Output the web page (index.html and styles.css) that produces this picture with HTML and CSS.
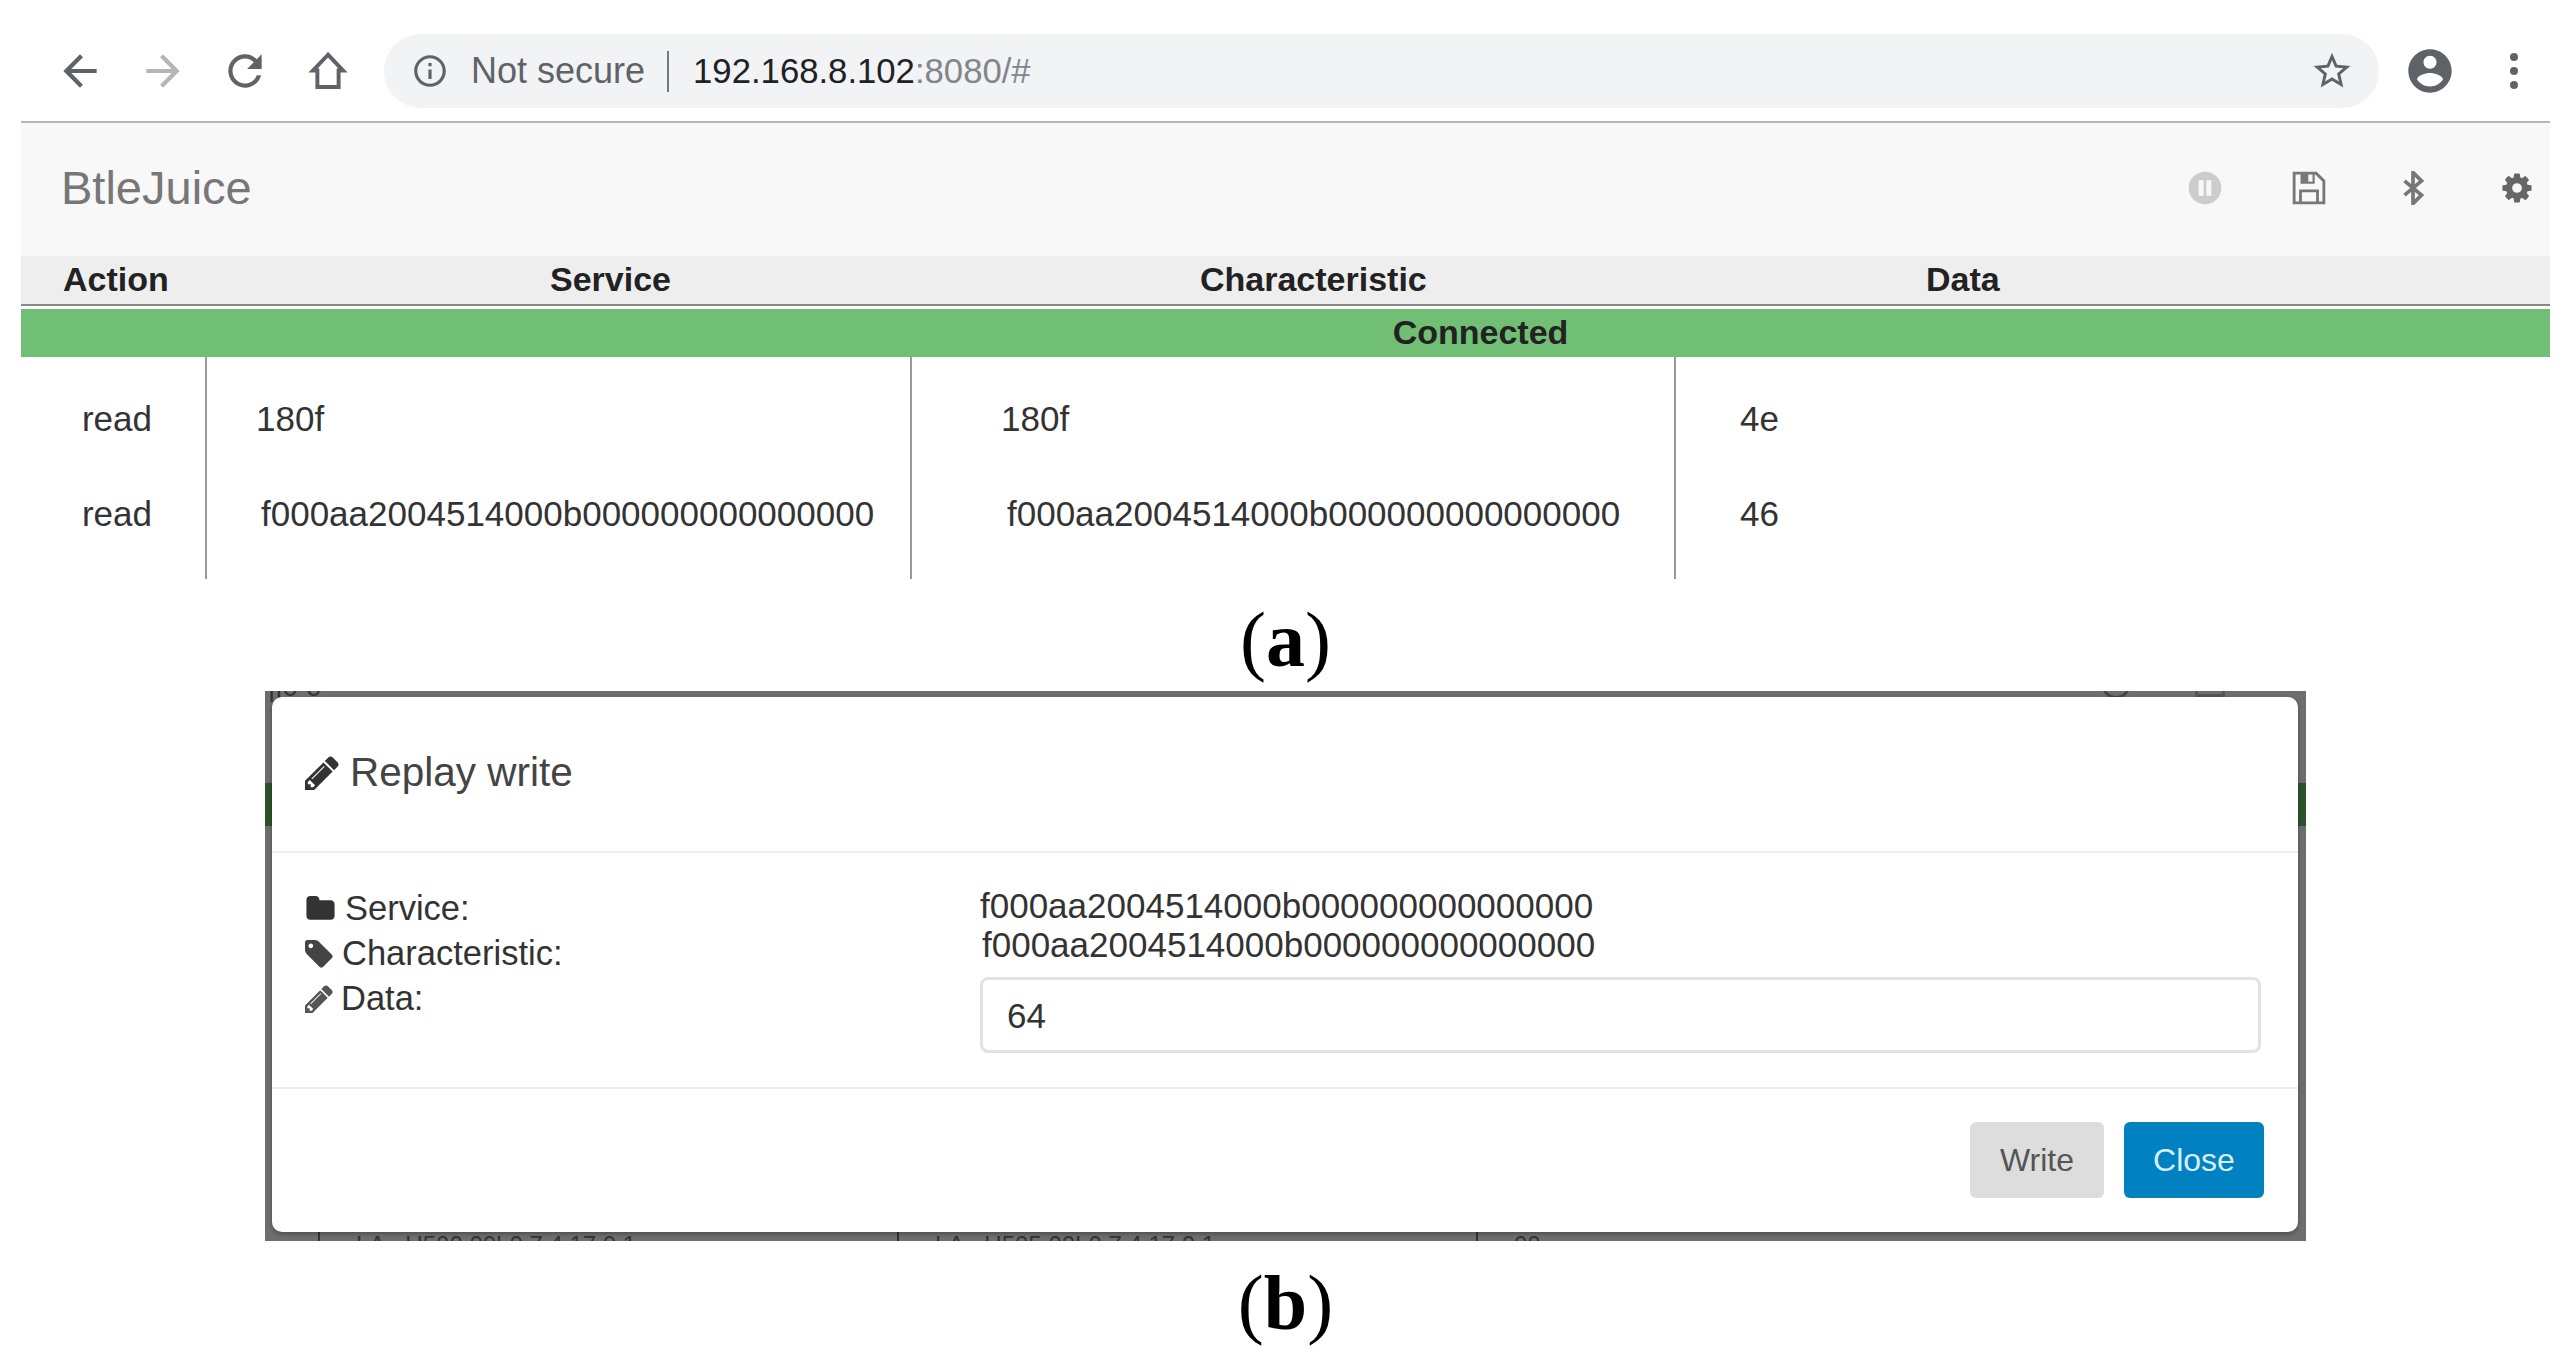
FILE: index.html
```html
<!DOCTYPE html>
<html lang="en">
<head>
<meta charset="UTF-8">
<title>BtleJuice</title>
<link rel="stylesheet" href="styles.css">
</head>
<body>
<div class="browser">
    <div class="toolbar">
        <div class="tool"><svg class="chrome-icon" viewBox="0 0 24 24"><path d="M20 11H7.83l5.59-5.59L12 4l-8 8 8 8 1.41-1.41L7.83 13H20v-2z"/></svg></div>
        <div class="tool tool-off"><svg class="chrome-icon" viewBox="0 0 24 24"><path d="M12 4l-1.41 1.41L16.17 11H4v2h12.17l-5.58 5.59L12 20l8-8z"/></svg></div>
        <div class="tool"><svg class="chrome-icon" viewBox="0 0 24 24"><path d="M17.65 6.35C16.2 4.9 14.21 4 12 4c-4.42 0-7.99 3.58-7.99 8s3.57 8 7.99 8c3.73 0 6.84-2.55 7.73-6h-2.08c-.82 2.33-3.04 4-5.65 4-3.31 0-6-2.69-6-6s2.69-6 6-6c1.66 0 3.14.69 4.22 1.78L13 11h7V4l-2.35 2.35z"/></svg></div>
        <div class="tool"><svg class="chrome-icon" viewBox="0 0 24 24"><path class="home-line" d="M12 4.200L4.800 11.800H6.900V19.700H17.100V11.800H19.200z"/></svg></div>
        <div class="omnibox">
            <svg class="info-icon" viewBox="0 0 24 24"><path d="M11 7h2v2h-2zm0 4h2v6h-2zm1-9C6.48 2 2 6.48 2 12s4.48 10 10 10 10-4.48 10-10S17.52 2 12 2zm0 18c-4.41 0-8-3.59-8-8s3.59-8 8-8 8 3.59 8 8-3.59 8-8 8z"/></svg>
            <span class="not-secure">Not secure</span>
            <span class="omni-sep"></span>
            <span class="url">192.168.8.102<span class="url-dim">:8080/#</span></span>
            <svg class="star-icon" viewBox="0 0 24 24"><path d="M22 9.24l-7.19-.62L12 2 9.19 8.63 2 9.24l5.46 4.73L5.82 21 12 17.27 18.18 21l-1.63-7.03L22 9.24zM12 15.4l-3.76 2.27 1-4.28-3.32-2.88 4.38-.38L12 6.1l1.71 4.04 4.38.38-3.32 2.88 1 4.28L12 15.4z"/></svg>
        </div>
        <svg class="account-icon" viewBox="0 0 24 24"><path d="M12 2C6.48 2 2 6.48 2 12s4.48 10 10 10 10-4.48 10-10S17.52 2 12 2zm0 3c1.66 0 3 1.34 3 3s-1.34 3-3 3-3-1.34-3-3 1.34-3 3-3zm0 14.2c-2.5 0-4.71-1.28-6-3.22.03-1.99 4-3.08 6-3.08 1.99 0 5.97 1.09 6 3.08-1.29 1.94-3.5 3.22-6 3.22z"/></svg>
        <div class="kebab"><span></span><span></span><span></span></div>
    </div>

    <div class="navbar">
        <div class="brand">BtleJuice</div>
        <div class="nav-icons">
            <svg class="nav-icon" viewBox="0 0 24 24"><circle cx="12" cy="12" r="11.5" fill="#ccc"/><rect x="7.5" y="6.5" width="3.5" height="11" fill="#f8f8f8"/><rect x="13" y="6.5" width="3.5" height="11" fill="#f8f8f8"/></svg>
            <svg class="nav-icon" viewBox="0 0 24 24"><path class="nav-line" d="M1.500 1.500H17L22.500 7V22.500H1.500z"/><path d="M6 1.500H16V9H6z" fill="#777"/><path d="M11.500 2.500H14.500V7.500H11.500z" fill="#f8f8f8"/><path class="nav-line" d="M6 22.500V14H18V22.500"/></svg>
            <svg class="nav-icon" viewBox="0 0 24 24"><path class="nav-line bt-line" d="M6 7l12 10-6 6V1l6 6L6 17"/></svg>
            <svg class="nav-icon" viewBox="0 0 1792 1792"><path fill="#666" d="M1152 896q0-106-75-181t-181-75-181 75-75 181 75 181 181 75 181-75 75-181zm512-109v222q0 12-8 23t-20 13l-185 28q-19 54-39 91 35 50 107 138 10 12 10 25t-9 23q-27 37-99 108t-94 71q-12 0-26-9l-138-108q-44 23-91 38-16 136-29 186-7 28-36 28h-222q-14 0-24.5-8.5t-11.5-21.5l-28-184q-49-16-90-37l-141 107q-10 9-25 9-14 0-25-11-126-114-165-168-7-10-7-23 0-12 8-23 15-21 51-66.5t54-70.5q-27-50-41-99l-183-27q-13-2-21-12.5t-8-23.5v-222q0-12 8-23t19-13l186-28q14-46 39-92-40-57-107-138-10-12-10-24 0-10 9-23 26-36 98.5-107.5t94.5-71.5q13 0 26 10l138 107q44-23 91-38 16-136 29-186 7-28 36-28h222q14 0 24.5 8.5t11.5 21.5l28 184q49 16 90 37l142-107q9-9 24-9 13 0 25 10 129 119 165 170 7 8 7 22 0 12-8 23-15 21-51 66.5t-54 70.5q26 50 41 98l183 28q13 2 21 12.5t8 23.5z"/></svg>
        </div>
    </div>

    <div class="list-head">
        <div>Action</div>
        <div>Service</div>
        <div>Characteristic</div>
        <div>Data</div>
    </div>
    <div class="status">Connected</div>

    <table class="log">
        <colgroup>
            <col class="col-action">
            <col class="col-service">
            <col class="col-char">
            <col>
        </colgroup>
        <tr>
            <td class="action">read</td>
            <td class="short-service">180f</td>
            <td class="short-char">180f</td>
            <td class="data">4e</td>
        </tr>
        <tr>
            <td class="action">read</td>
            <td class="long-service">f000aa2004514000b000000000000000</td>
            <td class="long-char">f000aa2004514000b000000000000000</td>
            <td class="data">46</td>
        </tr>
    </table>
</div>

<div class="caption caption-a">(<b>a</b>)</div>

<div class="backdrop">
    <div class="strip"></div>
    <div class="ghost ghost-top">||0 0</div>
    <div class="ghost ghost-dot-a"></div>
    <div class="ghost ghost-dot-b"></div>
    <div class="ghost-row">
        <div class="ghost-cell ghost-c1">LA...U500 00L0 7 4 17 0 1</div>
        <div class="ghost-cell ghost-c2">LA...U505 00L0 7 4 17 0 1</div>
        <div class="ghost-cell">00</div>
    </div>
    <div class="modal">
        <div class="modal-header">
            <svg class="title-icon" viewBox="128 128 1536 1536"><path d="M491 1536l91-91-235-235-91 91v107h128v128h107zm523-928q0-22-22-22-10 0-17 7l-542 542q-7 7-7 17 0 22 22 22 10 0 17-7l542-542q7-7 7-17zm-54-192l416 416-832 832h-416v-416zm683 96q0 53-37 90l-166 166-416-416 166-165q36-38 90-38 53 0 91 38l235 234q37 39 37 91z"/></svg>
            <span class="modal-title">Replay write</span>
        </div>
        <div class="modal-body">
            <div class="labels">
                <div class="label"><svg class="folder-icon" viewBox="64 128 1664 1536"><path d="M1728 608v704q0 92-66 158t-158 66h-1216q-92 0-158-66t-66-158v-960q0-92 66-158t158-66h320q92 0 158 66t66 158v32h672q92 0 158 66t66 158z"/></svg>Service:</div>
                <div class="label"><svg class="tag-icon" viewBox="128 128 1536 1536"><path d="M576 448q0-53-37.5-90.5t-90.5-37.5-90.5 37.5-37.5 90.5 37.5 90.5 90.5 37.5 90.5-37.5 37.5-90.5zm1067 576q0 53-37 90l-491 492q-39 37-91 37-53 0-90-37l-715-716q-38-37-64.5-101t-26.5-117v-416q0-52 38-90t90-38h416q53 0 117 26.5t102 64.5l715 714q37 39 37 91z"/></svg>Characteristic:</div>
                <div class="label"><svg class="pencil-icon" viewBox="128 128 1536 1536"><path d="M491 1536l91-91-235-235-91 91v107h128v128h107zm523-928q0-22-22-22-10 0-17 7l-542 542q-7 7-7 17 0 22 22 22 10 0 17-7l542-542q7-7 7-17zm-54-192l416 416-832 832h-416v-416zm683 96q0 53-37 90l-166 166-416-416 166-165q36-38 90-38 53 0 91 38l235 234q37 39 37 91z"/></svg>Data:</div>
            </div>
            <div class="values">
                <div class="value">f000aa2004514000b000000000000000</div>
                <div class="value value-shift">f000aa2004514000b000000000000000</div>
                <div class="data-input">64</div>
            </div>
        </div>
        <div class="modal-footer">
            <div class="btn btn-write">Write</div>
            <div class="btn btn-close">Close</div>
        </div>
    </div>
</div>

<div class="caption caption-b">(<b>b</b>)</div>
</body>
</html>
```

FILE: styles.css
```css
body {
    margin: 0;
    padding: 0 24px 0 21px;
    height: 1357px;
    overflow: hidden;
    background: #fff;
    font-family: "Liberation Sans", Arial, sans-serif;
    color: #333;
}

/* browser chrome */
.toolbar {
    display: flex;
    align-items: center;
    height: 121px;
    padding: 34px 0 13px 18px;
    box-sizing: border-box;
}
.tool {
    width: 82.5px;
    display: flex;
    justify-content: center;
    flex: none;
}
.chrome-icon {
    width: 50px;
    height: 50px;
    fill: #5f6368;
}
.tool-off .chrome-icon {
    fill: #b4b6b9;
}
.chrome-icon .home-line {
    fill: none;
    stroke: #5f6368;
    stroke-width: 1.9;
}
.omnibox {
    display: flex;
    align-items: center;
    width: 1995px;
    height: 74px;
    margin-left: 15px;
    padding-left: 27px;
    box-sizing: border-box;
    background: #f1f3f4;
    border-radius: 37px;
    font-size: 35px;
    flex: none;
}
.info-icon {
    width: 38px;
    height: 38px;
    fill: #5f6368;
    flex: none;
}
.not-secure {
    margin-left: 22px;
    font-size: 36px;
    color: #5f6368;
}
.omni-sep {
    width: 2px;
    height: 41px;
    margin: 0 24px 0 22px;
    background: #777;
}
.url {
    font-size: 34.7px;
    color: #202124;
}
.url-dim {
    color: #80868b;
}
.star-icon {
    width: 44px;
    height: 44px;
    margin-left: auto;
    margin-right: 25px;
    fill: #5f6368;
}
.account-icon {
    width: 52px;
    height: 52px;
    margin-left: 25px;
    fill: #5f6368;
    flex: none;
}
.kebab {
    display: flex;
    flex-direction: column;
    gap: 6px;
    margin-left: 54px;
}
.kebab span {
    width: 8px;
    height: 8px;
    border-radius: 50%;
    background: #5f6368;
}

/* app header */
.navbar {
    display: flex;
    align-items: center;
    justify-content: space-between;
    height: 129px;
    padding: 0 16px 4px 40px;
    background: #f8f8f8;
    border-top: 2px solid #b5b5b5;
}
.brand {
    font-size: 47px;
    color: #777;
}
.nav-icons {
    display: flex;
    align-items: center;
    gap: 70px;
}
.nav-icon {
    width: 34px;
    height: 34px;
}
.nav-line {
    fill: none;
    stroke: #777;
    stroke-width: 2;
}
.bt-line {
    stroke-width: 2.6;
}
.list-head {
    display: grid;
    grid-template-columns: 487px 650px 726px 1fr;
    align-items: center;
    height: 46px;
    padding: 0 0 2px 42px;
    background: #eee;
    border-bottom: 2px solid #888;
    font-size: 34px;
    font-weight: bold;
    color: #222;
}
.status {
    margin-top: 3px;
    height: 48px;
    line-height: 46px;
    padding-left: 390px;
    text-align: center;
    background: #71bf75;
    font-size: 34px;
    font-weight: bold;
    color: #222;
}

/* log table */
.log {
    width: 100%;
    table-layout: fixed;
    border-collapse: collapse;
    font-size: 35px;
    color: #333;
}
.col-action {
    width: 185px;
}
.col-service {
    width: 705px;
}
.col-char {
    width: 764px;
}
.log td {
    height: 95px;
    padding: 0;
    white-space: nowrap;
    border-left: 2px solid #999;
}
.log td:first-child {
    border-left: 0;
}
.log tr:first-child td {
    height: 109px;
    padding-top: 14px;
    box-sizing: border-box;
}
.log tr:last-child td {
    height: 113px;
    padding-bottom: 18px;
    box-sizing: border-box;
}
.log .action {
    padding-left: 8px;
    text-align: center;
}
.log .short-service {
    padding-left: 49px;
}
.log .long-service {
    padding-left: 54px;
}
.log .short-char {
    padding-left: 89px;
}
.log .long-char {
    padding-left: 95px;
}
.log .data {
    padding-left: 64px;
}

/* figure captions */
.caption {
    text-align: center;
    font-family: "Liberation Serif", "Times New Roman", serif;
    font-size: 78px;
    color: #000;
}
.caption-a {
    height: 112px;
    line-height: 122px;
}
.caption-b {
    height: 116px;
    line-height: 124px;
}

/* replay dialog on the dimmed page */
.backdrop {
    position: relative;
    width: 2041px;
    height: 550px;
    margin: 0 auto;
    padding: 6px 8px 9px 7px;
    box-sizing: border-box;
    background: #6e6e6e;
    overflow: hidden;
}
.strip {
    position: absolute;
    left: 0;
    right: 0;
    top: 92px;
    height: 43px;
    background: #2d5229;
}
.ghost {
    position: absolute;
    color: #333;
}
.ghost-top {
    left: 3px;
    top: -20px;
    font-size: 28px;
}
.ghost-dot-a {
    left: 1838px;
    top: -14px;
    width: 20px;
    height: 16px;
    border: 3px solid #444;
    border-radius: 50%;
}
.ghost-dot-b {
    left: 1930px;
    top: -12px;
    width: 24px;
    height: 12px;
    border: 3px solid #555;
}
.ghost-row {
    position: absolute;
    left: 53px;
    right: 0;
    bottom: 0;
    height: 11px;
    display: grid;
    grid-template-columns: 579px 579px 1fr;
    overflow: hidden;
}
.ghost-cell {
    border-left: 2px solid #333;
    padding: 3px 0 0 36px;
    font-size: 24px;
    line-height: 24px;
    color: #333;
    white-space: nowrap;
}
.modal {
    position: relative;
    display: flex;
    flex-direction: column;
    height: 535px;
    background: #fff;
    border-radius: 10px;
    box-shadow: 0 2px 4px rgba(0, 0, 0, 0.3);
}
.modal-header {
    display: flex;
    align-items: center;
    height: 156px;
    padding: 0 0 3px 33px;
    box-sizing: border-box;
    border-bottom: 2px solid #eee;
}
.title-icon {
    width: 34px;
    height: 34px;
    margin-right: 11px;
    fill: #333;
}
.modal-title {
    font-size: 40.5px;
    color: #444;
}
.modal-body {
    display: grid;
    grid-template-columns: 675px 1fr;
    height: 236px;
    padding: 33px 37px 0 33px;
    box-sizing: border-box;
    border-bottom: 2px solid #eee;
    font-size: 35px;
    color: #333;
}
.label {
    display: flex;
    align-items: center;
    height: 45px;
    font-size: 34.5px;
}
.folder-icon {
    width: 31px;
    height: 26px;
    margin-right: 9px;
    fill: #333;
}
.tag-icon {
    width: 28px;
    height: 28px;
    margin-right: 9px;
    fill: #444;
}
.pencil-icon {
    width: 28px;
    height: 28px;
    margin-right: 8px;
    fill: #555;
}
.value {
    height: 39px;
    line-height: 39px;
}
.value-shift {
    margin-left: 2px;
}
.data-input {
    height: 76px;
    margin-top: 13px;
    padding-left: 24px;
    line-height: 72px;
    box-sizing: border-box;
    border: 3px solid #e2e2e2;
    border-radius: 8px;
}
.modal-footer {
    display: flex;
    justify-content: flex-end;
    align-items: flex-start;
    gap: 20px;
    padding: 33px 34px 0 0;
}
.btn {
    height: 76px;
    line-height: 76px;
    text-align: center;
    border-radius: 6px;
    font-size: 32px;
}
.btn-write {
    width: 134px;
    background: #ddd;
    color: #555;
}
.btn-close {
    width: 140px;
    background: #0081c2;
    color: #d8eef9;
}
```
